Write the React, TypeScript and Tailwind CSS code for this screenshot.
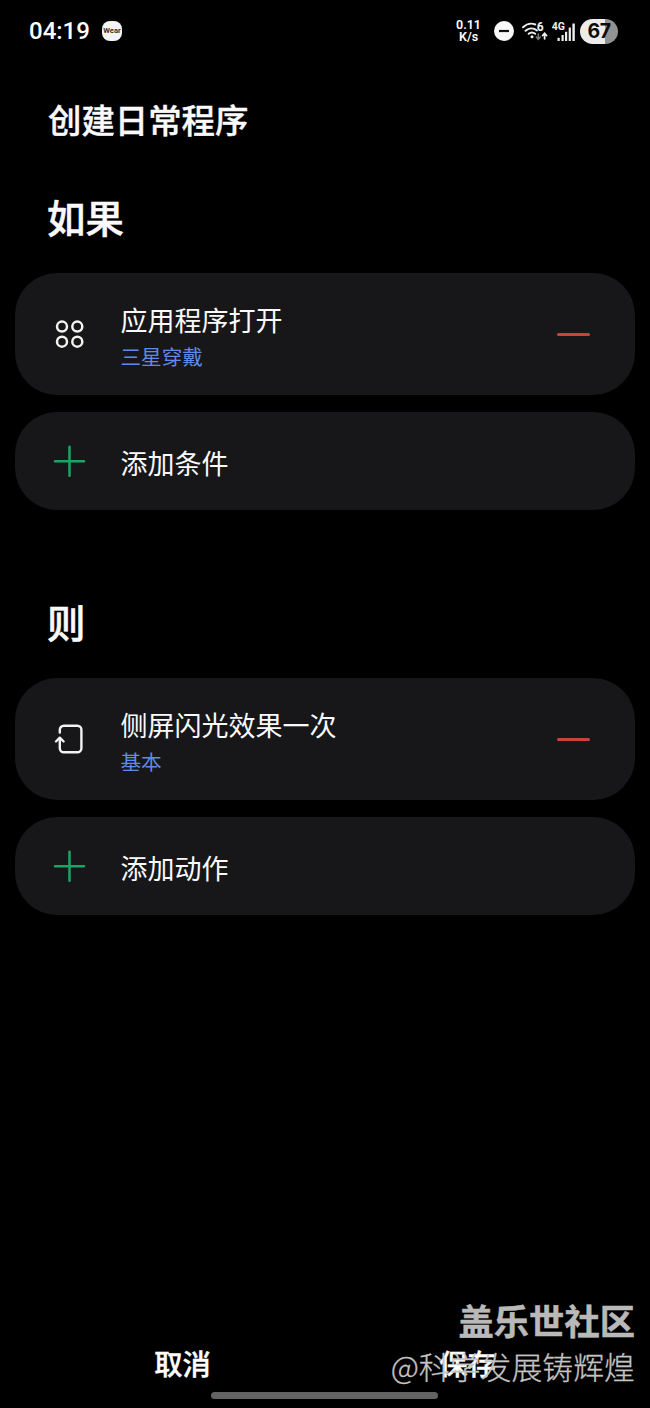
import type { ReactNode } from "react";

type RoutineItem = {
  icon: ReactNode;
  title: string;
  detail: string;
};

const conditions: RoutineItem[] = [
  { icon: <AppsIcon />, title: "应用程序打开", detail: "三星穿戴" },
];

const actions: RoutineItem[] = [
  { icon: <EdgeLightIcon />, title: "侧屏闪光效果一次", detail: "基本" },
];

export default function App() {
  return (
    <div className="relative flex h-[1408px] w-[650px] flex-col overflow-hidden bg-black font-['Noto_Sans_CJK_SC',sans-serif] text-[#fafafc]">
      <StatusBar />
      <h1 className="mt-[32px] px-12 text-[33.4px] leading-[50px] font-medium [-webkit-text-stroke:0.4px]">
        创建日常程序
      </h1>
      <main className="flex flex-1 flex-col px-[15px]">
        <Section
          className="mt-[44px]"
          heading="如果"
          items={conditions}
          addLabel="添加条件"
        />
        <Section
          className="mt-[83px]"
          heading="则"
          items={actions}
          addLabel="添加动作"
        />
      </main>
      <Footer />
      <Watermark />
    </div>
  );
}

function StatusBar() {
  return (
    <header className="flex h-[62px] shrink-0 items-center pr-8 pl-[29px] font-['Roboto',sans-serif] text-white">
      <span className="w-[73px] text-[24px] leading-none font-medium">04:19</span>
      <span className="flex size-5 items-center justify-center rounded-[8px] bg-[#f4f4f4] text-[7.6px] leading-none font-bold text-[#333]">
        Wear
      </span>
      <div className="ml-auto flex items-center">
        <div className="mr-[13px] flex flex-col text-center text-[12.5px] leading-[12px] font-semibold">
          <span>0.11</span>
          <span>K/s</span>
        </div>
        <svg className="mr-[7px] size-5" viewBox="0 0 20 20">
          <circle cx="10" cy="10" r="10" fill="#f8f8f8" />
          <path d="M5 10h10" stroke="#111" strokeWidth="2.2" />
        </svg>
        <WifiIcon />
        <SignalIcon />
        <div className="flex h-[25px] w-[38px] items-center justify-center rounded-full bg-linear-to-r from-[#ececec] from-66% to-[#929292] to-66% pt-[2px] font-['Inter',sans-serif] text-[19.5px] leading-none font-bold tracking-[-0.5px] text-[#0c0c0c]">
          67
        </div>
      </div>
    </header>
  );
}

function Section({
  className,
  heading,
  items,
  addLabel,
}: {
  className: string;
  heading: string;
  items: RoutineItem[];
  addLabel: string;
}) {
  return (
    <section className={className}>
      <h2 className="px-8 text-[38.4px] leading-[56px] font-medium [-webkit-text-stroke:0.5px]">
        {heading}
      </h2>
      <div className="mt-[29px] flex flex-col gap-[17.5px]">
        {items.map((item) => (
          <div
            key={item.title}
            className="flex h-[121.5px] items-center rounded-[42px] bg-[#17171a] pr-[45px] pl-[36px]"
          >
            <span className="w-[69.5px]">{item.icon}</span>
            <div className="flex flex-1 flex-col pt-[5px]">
              <span className="text-[27px] leading-[40px]">{item.title}</span>
              <span className="text-[20.6px] leading-[33px] text-[#5f8ae6]">
                {item.detail}
              </span>
            </div>
            <span className="mt-px h-[3px] w-[33px] rounded-full bg-[#c5443c]" />
          </div>
        ))}
        <div className="flex h-[98px] items-center rounded-[42px] bg-[#17171a] pl-[36px]">
          <span className="w-[69.5px]">
            <PlusIcon />
          </span>
          <span className="pt-[3px] text-[27px] leading-[40px]">{addLabel}</span>
        </div>
      </div>
    </section>
  );
}

function Footer() {
  return (
    <footer className="flex h-[68px] shrink-0 flex-col items-center">
      <div className="flex w-[570px] text-center text-[28.3px] leading-[46px] font-medium text-white [-webkit-text-stroke:0.4px]">
        <span className="flex-1">取消</span>
        <span className="flex-1">保存</span>
      </div>
      <span className="mt-[6px] mr-px h-[7px] w-[227px] rounded-full bg-[#636363]" />
    </footer>
  );
}

function Watermark() {
  return (
    <div className="absolute right-[15px] bottom-[19px] flex flex-col items-end whitespace-nowrap text-[#c4c4c4]">
      <span className="text-[35.3px] leading-[46px] font-bold text-[#b9b9b9] [-webkit-text-stroke:0.5px]">
        盖乐世社区
      </span>
      <span className="text-[30.9px] leading-[46px] font-light [-webkit-text-stroke:0.3px]">
        @科学发展铸辉煌
      </span>
    </div>
  );
}

function AppsIcon() {
  return (
    <svg
      className="size-9"
      viewBox="0 0 36 36"
      fill="none"
      stroke="#f2f2ee"
      strokeWidth="2.5"
    >
      <circle cx="11" cy="10.6" r="5" />
      <circle cx="26.3" cy="10.6" r="5" />
      <circle cx="11" cy="25.7" r="5" />
      <circle cx="26.3" cy="25.7" r="5" />
    </svg>
  );
}

function EdgeLightIcon() {
  return (
    <svg
      className="size-9"
      viewBox="0 0 36 36"
      fill="none"
      stroke="#f2f2f2"
      strokeWidth="2.4"
      strokeLinecap="round"
      strokeLinejoin="round"
    >
      <path d="M8.8 11.5V8.7a4 4 0 0 1 4-4h13.6a4 4 0 0 1 4 4v18.6a4 4 0 0 1-4 4H12.8a4 4 0 0 1-4-4V17.5" />
      <path d="m5 20.5 3.8-3.8 3.8 3.8" />
    </svg>
  );
}

function PlusIcon() {
  return (
    <svg
      className="size-9"
      viewBox="0 0 36 36"
      stroke="#1fa364"
      strokeWidth="2.5"
      strokeLinecap="round"
    >
      <path d="M4 18.2h29M18.5 3.7v29" />
    </svg>
  );
}

function WifiIcon() {
  return (
    <svg
      className="mr-[4px] h-6 w-[27px]"
      viewBox="0 0 27 24"
      fill="none"
      stroke="#eee"
      strokeWidth="1.9"
      strokeLinecap="round"
    >
      <path d="M2 8.3c4-3.8 8.5-4.4 12.3-2.8M4.5 11.8c3.4-3 8-3.2 11.5-.4M7.6 14.8c2-1.6 4.6-1.6 6.6 0" />
      <circle cx="11" cy="17.7" r="1.5" fill="#eee" stroke="none" />
      <path d="M17.3 15v5m-2-2 2 2.2 2-2.2" stroke="#777" strokeWidth="1.6" />
      <path d="M23.6 19.8v-5.5m-2 2.2 2-2.2 2 2.2" strokeWidth="1.8" />
      <text
        x="15.8"
        y="11.5"
        fill="#f4f4f4"
        stroke="none"
        fontSize="12"
        fontWeight="700"
      >
        6
      </text>
    </svg>
  );
}

function SignalIcon() {
  return (
    <svg className="mr-[4px] h-6 w-6" viewBox="0 0 24 24" fill="#eee">
      <text x="-0.3" y="10.5" fontSize="10.5" fontWeight="700">
        4G
      </text>
      <rect x="5.5" y="18.8" width="2.2" height="3.2" />
      <rect x="9.5" y="16" width="2.2" height="6" />
      <rect x="13" y="12.8" width="2.2" height="9.2" />
      <rect x="16.7" y="8.5" width="2.2" height="13.5" />
      <rect x="20.4" y="4.5" width="2.4" height="17.5" />
    </svg>
  );
}
